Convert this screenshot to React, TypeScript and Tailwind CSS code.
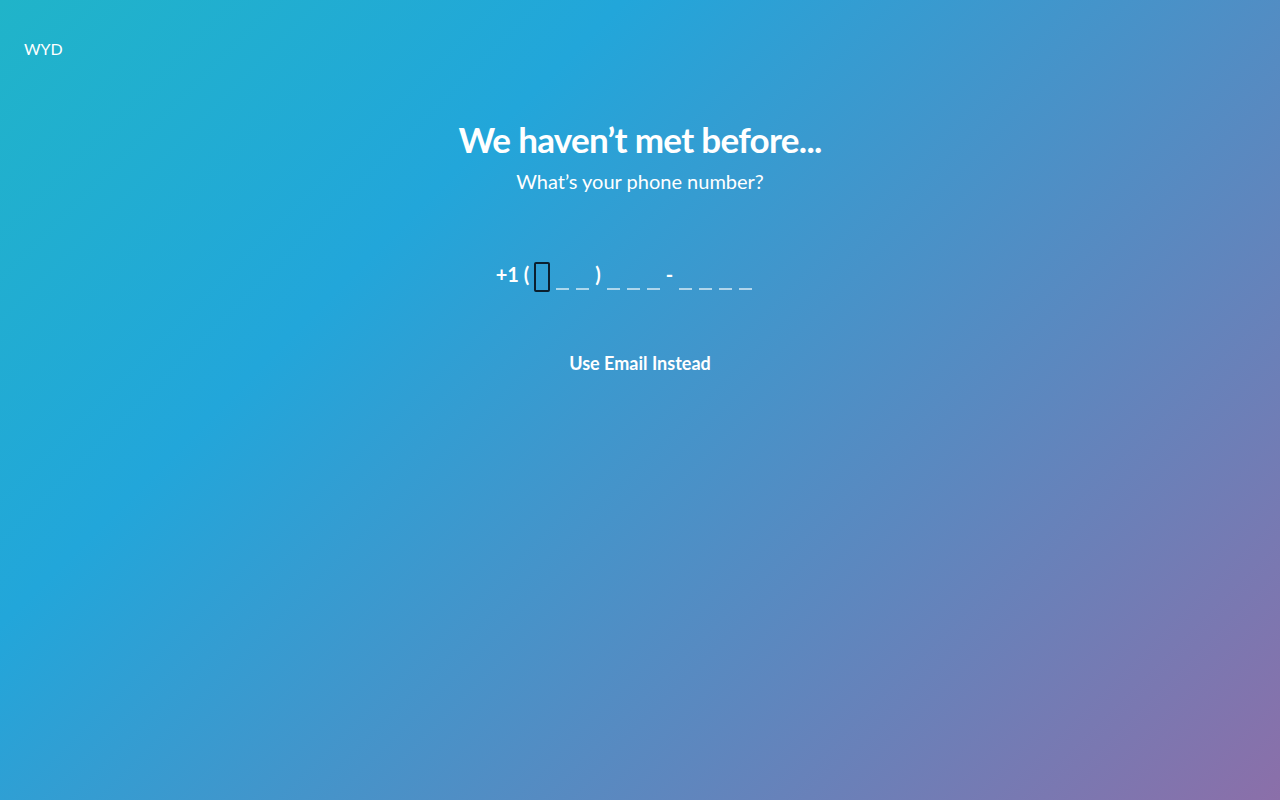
import React from "react";

function Slot({ focused }: { focused?: boolean }) {
  return (
    <span className="relative flex h-[30px] w-[16px] items-end justify-center">
      {focused ? (
        <span className="absolute inset-0 rounded-[2px] border-2 border-[#0b1f2e]" />
      ) : (
        <span className="mb-[2px] h-[2px] w-[13px] bg-white/60" />
      )}
    </span>
  );
}

export default function App() {
  return (
    <div
      className="relative h-[800px] w-[1280px] overflow-hidden text-white bg-[linear-gradient(135deg,#20b4c9_0%,#22a6da_30%,#8b6fa9_100%)]"
      style={{ fontFamily: 'Lato, "Noto Sans", sans-serif' }}
    >
      <div className="px-6 pt-[38px] text-[16px] leading-[22px]">WYD</div>
      <div className="flex flex-col items-center pt-[55px]">
        <h1 className="text-[35px] font-bold leading-[48px] tracking-[-0.7px]">We haven’t met before...</h1>
        <p className="mt-[4px] text-[20px] leading-[28px]">What’s your phone number?</p>
        <div className="mt-[64px] mr-[31px] flex items-end text-[20px] font-bold leading-[30px]">
          <span className="mr-[5px] pb-[3px]">+1 (</span>
          <div className="flex gap-[4px]">
            <Slot focused />
            <Slot />
            <Slot />
          </div>
          <span className="mx-[5px] pb-[3px]">)</span>
          <div className="flex gap-[4px]">
            <Slot />
            <Slot />
            <Slot />
          </div>
          <span className="mx-[4px] pb-[3px]">-</span>
          <div className="flex gap-[4px]">
            <Slot />
            <Slot />
            <Slot />
            <Slot />
          </div>
        </div>
        <button className="mt-[58px] text-[18px] font-bold leading-[26px] text-white">Use Email Instead</button>
      </div>
    </div>
  );
}
